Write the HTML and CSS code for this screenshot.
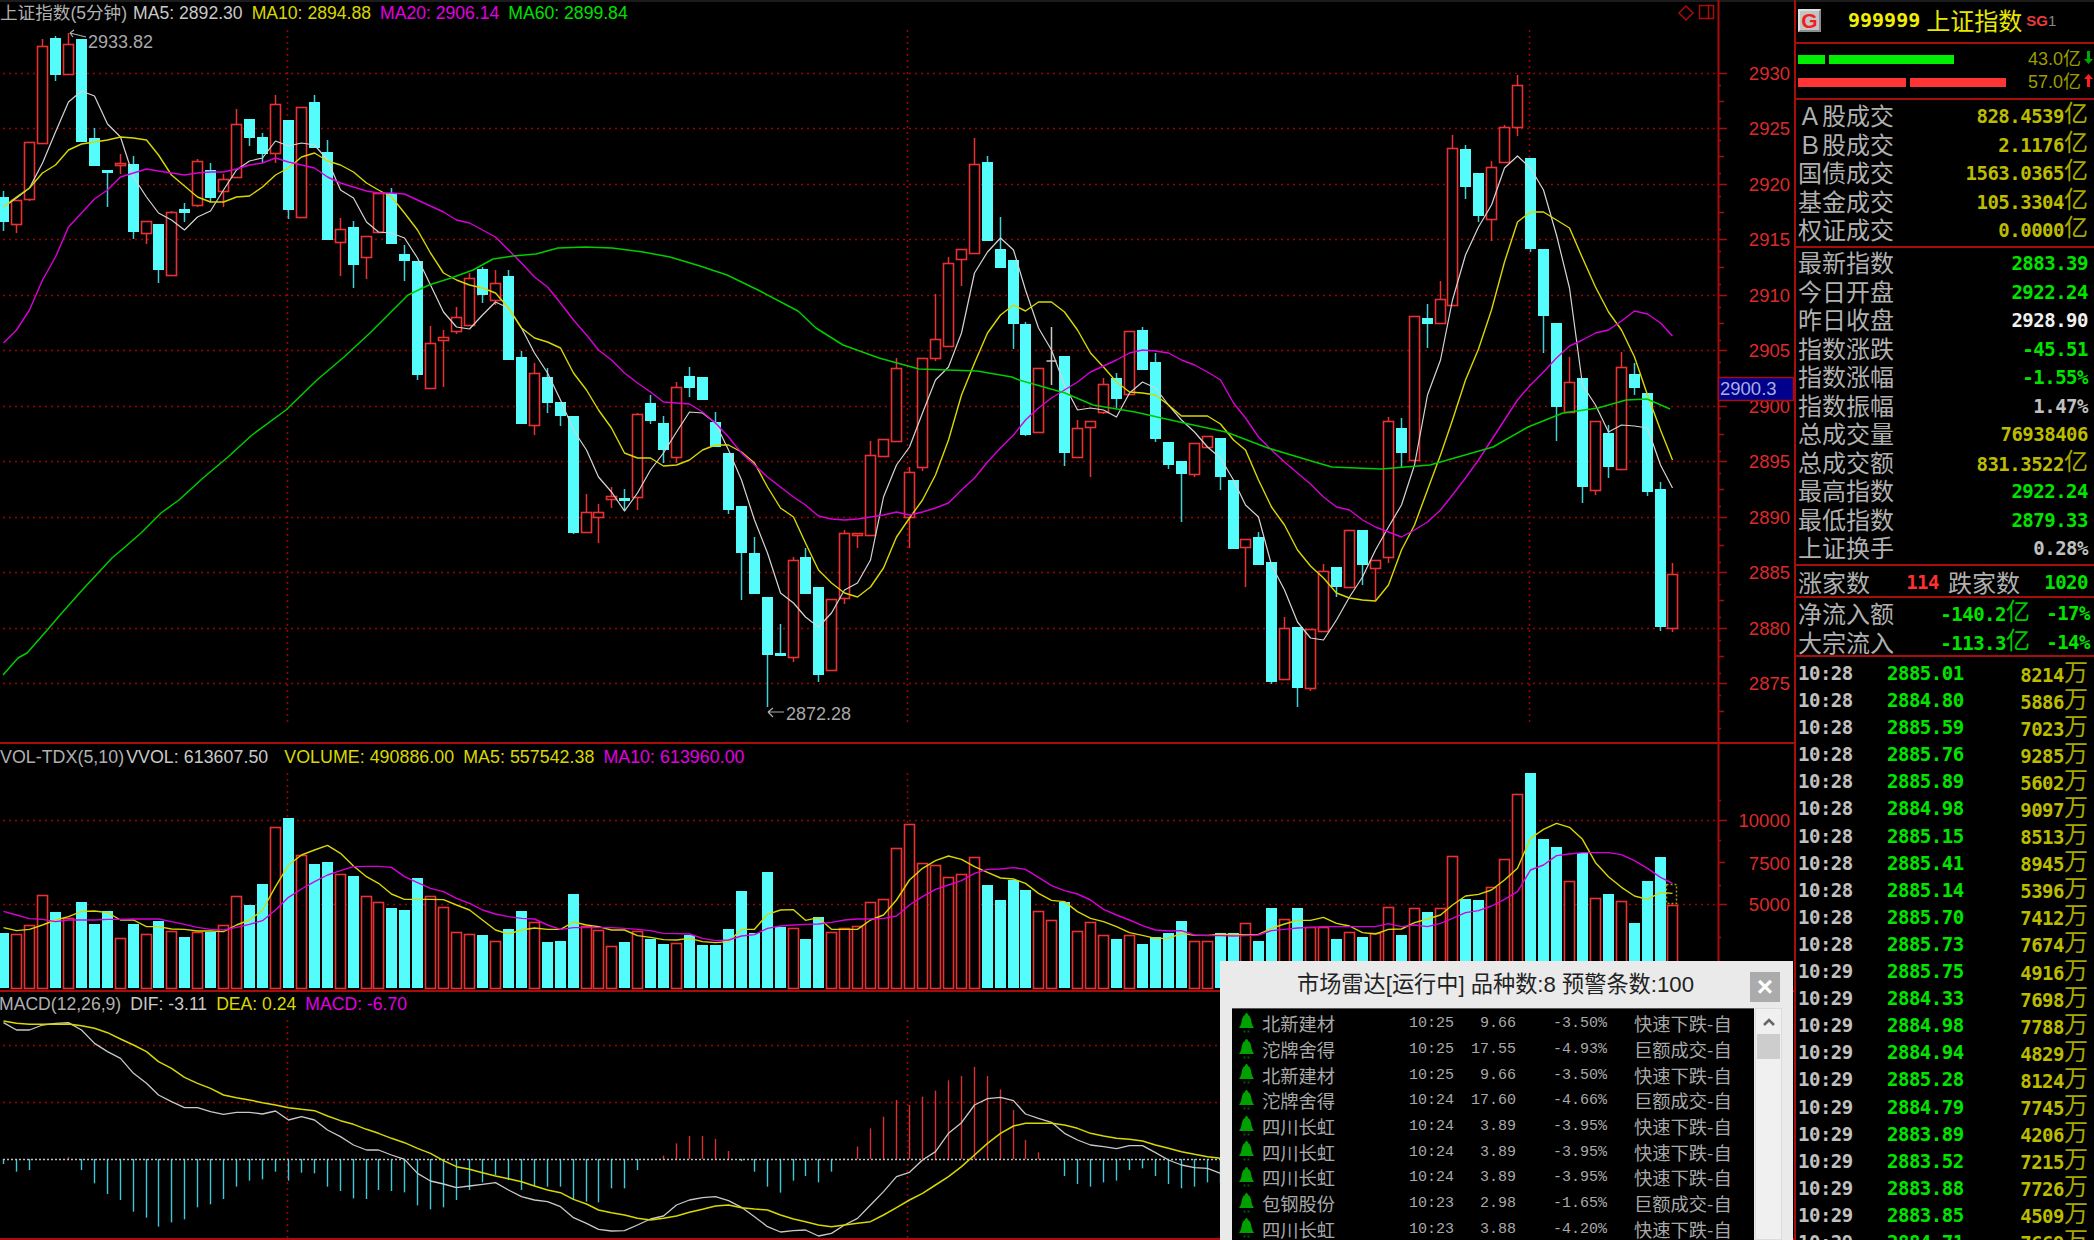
FILE: index.html
```html
<!DOCTYPE html>
<html lang="zh-CN">
<head>
<meta charset="utf-8">
<title>上证指数</title>
<link rel="stylesheet" href="styles.css">
</head>
<body>
<svg class="defs" aria-hidden="true"><defs>
  <symbol id="bell" viewBox="0 0 17 24">
    <path d="M8.500 1C7.500 1 7 2 7 3 4.500 4 4 7 3.500 10 3 13 2 14.500 1 16H16C15 14.500 14 13 13.500 10 13 7 12.500 4 10 3 10 2 9.500 1 8.500 1Z"/>
    <rect class="bell-dot" x="5.500" y="18.500" width="2" height="2"/><rect class="bell-dot" x="9.500" y="18.500" width="2" height="2"/>
  </symbol>
</defs></svg>
<div class="app">
  <div class="charts">
    <section class="pane pane-main">
      <div class="legend legend-main">
        <span class="c-gray first">上证指数(5分钟)</span>
        <span class="c-white">MA5: 2892.30</span>
        <span class="c-yellow">MA10: 2894.88</span>
        <span class="c-magenta">MA20: 2906.14</span>
        <span class="c-green">MA60: 2899.84</span>
      </div>
      <svg class="plot" width="1794" height="742" viewBox="0 0 1794 742">
        <rect class="top-edge" x="0" y="0" width="1794" height="2"/>
        <g id="plot-main"></g>
        <path class="mark" d="M86 37 70 33M70 33 74 30M70 33 73 37"/>
        <text class="mark-text" x="88" y="48">2933.82</text>
        <path class="mark" d="M784 712H768M768 712 773 708M768 712 773 717"/>
        <text class="mark-text" x="786" y="720">2872.28</text>
        <path class="tool" d="M1686 6 1693 13 1686 20 1679 13Z"/>
        <path class="tool" d="M1699.500 5.500H1713.500V18.500H1699.500ZM1708.500 5.500V18.500"/>
        <text class="axis" x="1790" y="79.500">2930</text>
        <text class="axis" x="1790" y="135">2925</text>
        <text class="axis" x="1790" y="190.500">2920</text>
        <text class="axis" x="1790" y="246">2915</text>
        <text class="axis" x="1790" y="301.500">2910</text>
        <text class="axis" x="1790" y="357">2905</text>
        <text class="axis" x="1790" y="412.500">2900</text>
        <text class="axis" x="1790" y="468">2895</text>
        <text class="axis" x="1790" y="523.500">2890</text>
        <text class="axis" x="1790" y="579">2885</text>
        <text class="axis" x="1790" y="634.500">2880</text>
        <text class="axis" x="1790" y="690">2875</text>
        <rect class="cur-box" x="1718.500" y="377.500" width="75" height="23"/>
        <text class="cur-text" x="1720" y="395">2900.3</text>
      </svg>
    </section>
    <section class="pane pane-vol">
      <div class="legend legend-vol">
        <span class="c-gray first-vol">VOL-TDX(5,10)</span>
        <span class="c-white">VVOL: 613607.50</span>
        <span class="c-yellow gap-wide">VOLUME: 490886.00</span>
        <span class="c-yellow">MA5: 557542.38</span>
        <span class="c-magenta">MA10: 613960.00</span>
      </div>
      <svg class="plot" width="1794" height="246" viewBox="0 744 1794 246">
        <g id="plot-vol"></g>
        <text class="axis" x="1790" y="827">10000</text>
        <text class="axis" x="1790" y="870">7500</text>
        <text class="axis" x="1790" y="911">5000</text>
      </svg>
    </section>
    <section class="pane pane-macd">
      <div class="legend legend-macd">
        <span class="c-gray">MACD(12,26,9)</span>
        <span class="c-white">DIF: -3.11</span>
        <span class="c-yellow">DEA: 0.24</span>
        <span class="c-magenta">MACD: -6.70</span>
      </div>
      <svg class="plot" width="1794" height="246" viewBox="0 992 1794 246">
        <g id="plot-macd"></g>
      </svg>
    </section>
  </div>

  <aside class="side">
    <header class="head">
      <span class="g-badge">G</span>
      <span class="code">999999</span>
      <span class="head-name">上证指数</span>
      <span class="sg">SG</span><span class="sg-n">1</span>
    </header>
    <section class="flow">
      <div class="flow-row">
        <div class="flow-bars"><i class="bar bar-g" style="width:27px"></i><i class="bar bar-g" style="width:125px"></i></div>
        <span class="flow-text">43.0<span class="flow-unit">亿</span></span>
        <svg class="arrow a-down" viewBox="0 0 9 13"><path d="M3 0H6V8H9L4.500 13 0 8H3Z"/></svg>
      </div>
      <div class="flow-row">
        <div class="flow-bars"><i class="bar bar-r" style="width:108px"></i><i class="bar bar-r" style="width:96px"></i></div>
        <span class="flow-text">57.0<span class="flow-unit">亿</span></span>
        <svg class="arrow a-up" viewBox="0 0 9 13"><path d="M3 13H6V5H9L4.500 0 0 5H3Z"/></svg>
      </div>
    </section>
    <section class="group group-a">
      <div class="row"><span class="lab">Ａ股成交</span><span class="val y">828.4539<span class="unit">亿</span></span></div>
      <div class="row"><span class="lab">Ｂ股成交</span><span class="val y">2.1176<span class="unit">亿</span></span></div>
      <div class="row"><span class="lab">国债成交</span><span class="val y">1563.0365<span class="unit">亿</span></span></div>
      <div class="row"><span class="lab">基金成交</span><span class="val y">105.3304<span class="unit">亿</span></span></div>
      <div class="row"><span class="lab">权证成交</span><span class="val y">0.0000<span class="unit">亿</span></span></div>
    </section>
    <section class="group group-b">
      <div class="row"><span class="lab">最新指数</span><span class="val g">2883.39</span></div>
      <div class="row"><span class="lab">今日开盘</span><span class="val g">2922.24</span></div>
      <div class="row"><span class="lab">昨日收盘</span><span class="val w">2928.90</span></div>
      <div class="row"><span class="lab">指数涨跌</span><span class="val g">-45.51</span></div>
      <div class="row"><span class="lab">指数涨幅</span><span class="val g">-1.55%</span></div>
      <div class="row"><span class="lab">指数振幅</span><span class="val l">1.47%</span></div>
      <div class="row"><span class="lab">总成交量</span><span class="val y">76938406</span></div>
      <div class="row"><span class="lab">总成交额</span><span class="val y">831.3522<span class="unit">亿</span></span></div>
      <div class="row"><span class="lab">最高指数</span><span class="val g">2922.24</span></div>
      <div class="row"><span class="lab">最低指数</span><span class="val g">2879.33</span></div>
      <div class="row"><span class="lab">上证换手</span><span class="val l">0.28%</span></div>
    </section>
    <section class="group breadth">
      <span class="lab">涨家数</span><span class="val r">114</span><span class="lab lab-2">跌家数</span><span class="val g">1020</span>
    </section>
    <section class="group group-c">
      <div class="row"><span class="lab lab-fill">净流入额</span><span class="val g">-140.2<span class="unit ug">亿</span></span><span class="val g pct">-17%</span></div>
      <div class="row"><span class="lab lab-fill">大宗流入</span><span class="val g">-113.3<span class="unit ug">亿</span></span><span class="val g pct">-14%</span></div>
    </section>
    <section class="trades">
      <div class="trade"><span class="l">10:28</span><span class="g">2885.01</span><span class="y vol">8214<span class="unit">万</span></span></div>
      <div class="trade"><span class="l">10:28</span><span class="g">2884.80</span><span class="y vol">5886<span class="unit">万</span></span></div>
      <div class="trade"><span class="l">10:28</span><span class="g">2885.59</span><span class="y vol">7023<span class="unit">万</span></span></div>
      <div class="trade"><span class="l">10:28</span><span class="g">2885.76</span><span class="y vol">9285<span class="unit">万</span></span></div>
      <div class="trade"><span class="l">10:28</span><span class="g">2885.89</span><span class="y vol">5602<span class="unit">万</span></span></div>
      <div class="trade"><span class="l">10:28</span><span class="g">2884.98</span><span class="y vol">9097<span class="unit">万</span></span></div>
      <div class="trade"><span class="l">10:28</span><span class="g">2885.15</span><span class="y vol">8513<span class="unit">万</span></span></div>
      <div class="trade"><span class="l">10:28</span><span class="g">2885.41</span><span class="y vol">8945<span class="unit">万</span></span></div>
      <div class="trade"><span class="l">10:28</span><span class="g">2885.14</span><span class="y vol">5396<span class="unit">万</span></span></div>
      <div class="trade"><span class="l">10:28</span><span class="g">2885.70</span><span class="y vol">7412<span class="unit">万</span></span></div>
      <div class="trade"><span class="l">10:28</span><span class="g">2885.73</span><span class="y vol">7674<span class="unit">万</span></span></div>
      <div class="trade"><span class="l">10:29</span><span class="g">2885.75</span><span class="y vol">4916<span class="unit">万</span></span></div>
      <div class="trade"><span class="l">10:29</span><span class="g">2884.33</span><span class="y vol">7698<span class="unit">万</span></span></div>
      <div class="trade"><span class="l">10:29</span><span class="g">2884.98</span><span class="y vol">7788<span class="unit">万</span></span></div>
      <div class="trade"><span class="l">10:29</span><span class="g">2884.94</span><span class="y vol">4829<span class="unit">万</span></span></div>
      <div class="trade"><span class="l">10:29</span><span class="g">2885.28</span><span class="y vol">8124<span class="unit">万</span></span></div>
      <div class="trade"><span class="l">10:29</span><span class="g">2884.79</span><span class="y vol">7745<span class="unit">万</span></span></div>
      <div class="trade"><span class="l">10:29</span><span class="g">2883.89</span><span class="y vol">4206<span class="unit">万</span></span></div>
      <div class="trade"><span class="l">10:29</span><span class="g">2883.52</span><span class="y vol">7215<span class="unit">万</span></span></div>
      <div class="trade"><span class="l">10:29</span><span class="g">2883.88</span><span class="y vol">7726<span class="unit">万</span></span></div>
      <div class="trade"><span class="l">10:29</span><span class="g">2883.85</span><span class="y vol">4509<span class="unit">万</span></span></div>
      <div class="trade"><span class="l">10:29</span><span class="g">2884.71</span><span class="y vol">7669<span class="unit">万</span></span></div>
    </section>
  </aside>

  <div class="radar">
    <div class="radar-head">
      <span class="radar-title">市场雷达[运行中] 品种数:8 预警条数:100</span>
      <span class="radar-close">×</span>
    </div>
    <div class="radar-body">
      <div class="radar-list">
        <div class="radar-row"><svg class="bell"><use href="#bell"/></svg><span>北新建材</span><span class="m">10:25</span><span class="m num">9.66</span><span class="m pc">-3.50%</span><span>快速下跌-自</span></div>
        <div class="radar-row"><svg class="bell"><use href="#bell"/></svg><span>沱牌舍得</span><span class="m">10:25</span><span class="m num">17.55</span><span class="m pc">-4.93%</span><span>巨额成交-自</span></div>
        <div class="radar-row"><svg class="bell"><use href="#bell"/></svg><span>北新建材</span><span class="m">10:25</span><span class="m num">9.66</span><span class="m pc">-3.50%</span><span>快速下跌-自</span></div>
        <div class="radar-row"><svg class="bell"><use href="#bell"/></svg><span>沱牌舍得</span><span class="m">10:24</span><span class="m num">17.60</span><span class="m pc">-4.66%</span><span>巨额成交-自</span></div>
        <div class="radar-row"><svg class="bell"><use href="#bell"/></svg><span>四川长虹</span><span class="m">10:24</span><span class="m num">3.89</span><span class="m pc">-3.95%</span><span>快速下跌-自</span></div>
        <div class="radar-row"><svg class="bell"><use href="#bell"/></svg><span>四川长虹</span><span class="m">10:24</span><span class="m num">3.89</span><span class="m pc">-3.95%</span><span>快速下跌-自</span></div>
        <div class="radar-row"><svg class="bell"><use href="#bell"/></svg><span>四川长虹</span><span class="m">10:24</span><span class="m num">3.89</span><span class="m pc">-3.95%</span><span>快速下跌-自</span></div>
        <div class="radar-row"><svg class="bell"><use href="#bell"/></svg><span>包钢股份</span><span class="m">10:23</span><span class="m num">2.98</span><span class="m pc">-1.65%</span><span>巨额成交-自</span></div>
        <div class="radar-row"><svg class="bell"><use href="#bell"/></svg><span>四川长虹</span><span class="m">10:23</span><span class="m num">3.88</span><span class="m pc">-4.20%</span><span>快速下跌-自</span></div>
      </div>
      <div class="scrollbar">
        <svg class="chevron" viewBox="0 0 12 8"><path d="M1 7 6 2 11 7"/></svg>
        <div class="thumb"></div>
      </div>
    </div>
  </div>
</div>
<script src="chart.js"></script>
</body>
</html>
```
FILE: styles.css
```css
* { box-sizing: border-box; }
html, body { margin: 0; padding: 0; background: #000; }
.defs { position: absolute; width: 0; height: 0; }
.app {
  position: relative;
  display: flex;
  width: 2094px;
  height: 1240px;
  overflow: hidden;
  background: #000;
  font-family: "Liberation Sans", "Noto Sans CJK SC", sans-serif;
}

/* chart column */
.charts { display: flex; flex-direction: column; width: 1794px; flex: none; }
.pane { position: relative; flex: none; border-bottom: 2px solid #a80c0c; }
.pane-main { height: 744px; }
.pane-vol { height: 248px; }
.pane-macd { height: 248px; }
.plot { display: block; }
.legend {
  position: absolute;
  left: 0;
  display: flex;
  gap: 9px;
  font-size: 17.600px;
  line-height: 22px;
  white-space: nowrap;
}
.legend-main { top: 2px; }
.legend-vol { top: 2px; font-size: 17.800px; letter-spacing: 0.050px; }
.legend-macd { top: 1px; left: -1px; }
.first { margin-right: -3px; }
.first-vol { margin-right: -7px; }
.gap-wide { margin-left: 7px; }
.c-gray { color: #b0b0b0; }
.c-white { color: #c8c8c8; }
.c-yellow { color: #d8d800; }
.c-magenta { color: #e000e0; }
.c-green { color: #00e000; }

.top-edge { fill: #1c1c1c; }
.axis { fill: #dc2a2a; font-size: 18.500px; text-anchor: end; }
.cur-box { fill: #00008c; stroke: #a80c0c; stroke-width: 1.500; }
.cur-text { fill: #a8b0e0; font-size: 18.500px; }
.mark { fill: none; stroke: #b0b0b0; stroke-width: 1.200; }
.mark-text { fill: #a8a8a8; font-size: 18px; }
.tool { fill: none; stroke: #a80c0c; stroke-width: 1.500; }

/* right panel */
.side {
  flex: none;
  width: 300px;
  height: 1240px;
  border-left: 2px solid #a80c0c;
  display: flex;
  flex-direction: column;
  color: #b4b4b4;
}
.head {
  height: 44px;
  flex: none;
  display: flex;
  align-items: center;
  padding: 0 0 4px 2px;
  border-top: 2px solid #1c1c1c;
  border-bottom: 2px solid #a80c0c;
}
.g-badge {
  width: 23px;
  height: 23px;
  background: #c4c4c4;
  border: 2px outset #e0e0e0;
  color: #f02020;
  font: bold 21px/19px "Liberation Sans", sans-serif;
  text-align: center;
}
.code {
  margin-left: 27px;
  color: #f0f000;
  font: bold 20px "DejaVu Sans Mono", monospace;
}
.head-name { margin-left: 6px; color: #e8e800; font: 24px/28px "Noto Sans CJK SC", sans-serif; }
.sg { margin-left: 4px; color: #e83c3c; font: bold 15px "Liberation Sans", sans-serif; }
.sg-n { color: #888; font: 15px "Liberation Sans", sans-serif; }

.flow {
  height: 56px;
  flex: none;
  padding: 4px 0 0 2px;
  border-bottom: 2px solid #a80c0c;
}
.flow-row { display: flex; align-items: center; height: 23px; }
.flow-bars { display: flex; gap: 4px; width: 230px; flex: none; }
.bar { display: block; height: 9px; }
.bar-g { background: #00ee00; }
.bar-r { background: #ff3434; }
.flow-text { width: 56px; flex: none; color: #9c9c00; font-size: 18px; line-height: 22px; margin-top: -2px; white-space: nowrap; }
.flow-unit { font-size: 18px; }
.arrow { width: 9px; height: 13px; flex: none; margin-top: -4px; }
.a-down { fill: #00a800; }
.a-up { fill: #ff2020; }

.group {
  flex: none;
  padding: 0 6px 0 2px;
  border-bottom: 2px solid #a80c0c;
}
.group-a { height: 148px; padding-top: 2px; }
.group-b { height: 318px; padding-top: 1px; }
.group-c { height: 59px; padding-top: 1px; }
.row { display: flex; justify-content: space-between; align-items: center; height: 28.500px; }
.lab {
  color: #b0b0b0;
  font: 24px/28px "Noto Sans CJK SC", sans-serif;
  white-space: nowrap;
}
.group-a .lab, .group-b .lab, .group-a .val { margin-top: -2px; }
.lab-fill { flex: 1; }
.val {
  font: bold 19px/28px "DejaVu Sans Mono", monospace;
  letter-spacing: -0.500px;
  white-space: nowrap;
}
.unit {
  font: 24px/24px "Noto Sans CJK SC", sans-serif;
  letter-spacing: 0;
  color: #a8a800;
  vertical-align: 1px;
}
.ug { color: #00c800; }
.pct { width: 60px; text-align: right; margin-right: -2px; }
.breadth {
  height: 32px;
  padding-top: 1px;
  display: grid;
  grid-template-columns: 72px 69px 81px 68px;
  align-items: center;
}
.breadth .val { text-align: right; }
.lab-2 { padding-left: 9px; }
.g { color: #00e400; }
.y { color: #bcbc00; }
.w { color: #f0f0f0; }
.l { color: #c0c0c0; }
.r { color: #ff3030; }

.trades { flex: 1; min-height: 0; overflow: hidden; padding: 1.500px 6px 0 2px; }
.trade {
  display: grid;
  grid-template-columns: 89px 1fr auto;
  align-items: center;
  height: 27.100px;
  font: bold 19px/27px "DejaVu Sans Mono", monospace;
  letter-spacing: -0.500px;
}
.vol { white-space: nowrap; }

/* radar popup */
.radar {
  position: absolute;
  left: 1220px;
  top: 961px;
  width: 573px;
  height: 279px;
  background: #eaeaea;
  display: flex;
  flex-direction: column;
}
.radar-head { flex: none; height: 47px; display: flex; align-items: flex-start; }
.radar-title {
  margin: 10px 0 0 77px;
  color: #222;
  font-size: 22.200px;
  line-height: 28px;
  white-space: nowrap;
}
.radar-close {
  margin: 11px 13px 0 auto;
  width: 30px;
  height: 30px;
  background: #ababab;
  color: #fff;
  text-align: center;
  font: bold 28px/30px "Liberation Sans", sans-serif;
}
.radar-body { flex: 1; min-height: 0; display: flex; padding-left: 12px; }
.radar-list {
  width: 522px;
  flex: none;
  background: #000;
  border-top: 1px solid #555;
  padding-top: 2px;
  overflow: hidden;
}
.radar-row {
  display: grid;
  grid-template-columns: 30px 147px 45px 62px 118px auto;
  align-items: center;
  height: 25.700px;
  color: #a8a8a8;
  font: 18.300px/25px "Noto Sans CJK SC", sans-serif;
  white-space: nowrap;
}
.bell { width: 17px; height: 24px; margin-left: 6px; fill: #00a000; }
.bell-dot { fill: #005800; }
.m { font: 15px/25px "Liberation Mono", monospace; }
.num { text-align: right; }
.pc { padding-left: 37px; }
.scrollbar {
  width: 27px;
  flex: none;
  margin-left: 1px;
  background: #f0f0f0;
  border: 1px solid #dcdcdc;
  padding: 9px 1px 0;
  display: flex;
  flex-direction: column;
  align-items: center;
}
.chevron { width: 12px; height: 8px; fill: none; stroke: #666; stroke-width: 2.500; }
.thumb { width: 100%; height: 25px; margin-top: 8px; background: #cdcdcd; }
```
FILE: chart.js
```js
(function () {
  var NS = 'http://www.w3.org/2000/svg';
  var RED = '#e83232', CYAN = '#54fcfc', GRID = '#a00000', AXIS = '#a80c0c';
  function X(i) { return Math.round(3.2 + 12.94 * i) + 0.5; }
  function el(parent, name, attrs) {
    var n = document.createElementNS(NS, name);
    for (var k in attrs) n.setAttribute(k, attrs[k]);
    parent.appendChild(n);
    return n;
  }
  function line(g, x1, y1, x2, y2, color, w, dash) {
    var a = { x1: x1, y1: y1, x2: x2, y2: y2, stroke: color, 'stroke-width': w || 1.5 };
    if (dash) a['stroke-dasharray'] = dash;
    return el(g, 'line', a);
  }
  function poly(g, pts, color, w) {
    el(g, 'polyline', { points: pts.join(' '), fill: 'none', stroke: color, 'stroke-width': w, 'stroke-linejoin': 'round' });
  }
  function series(g, ys, color, w, map) {
    poly(g, ys.map(function (y, i) { return X(i) + ',' + (map ? map(y) : y); }), color, w);
  }
  function zoomY(z) { return z / 3 + 740; }

  var C = [
    ['c',197,222,191,231],['r',200,224,200,233],['r',142,199,142,201],['r',46,143,39,143],['c',38,75,36,81],
    ['r',44,74,33,74],['c',39,142,39,142],['c',138,166,128,166],['c',170,171,170,207],['r',163,165,154,174],
    ['c',164,232,156,239],['r',221,233,221,244],['c',224,270,224,283],['r',212,275,211,275],['c',209,213,203,222],
    ['r',161,205,159,207],['c',170,198,163,202],['r',179,191,174,207],['r',124,177,109,177],['c',119,138,119,146],
    ['c',137,154,133,163],['r',104,153,95,163],['c',120,210,120,219],['r',107,217,107,217],['c',102,148,95,148],
    ['c',152,240,140,240],['r',229,242,218,276],['c',227,265,221,288],['r',236,257,236,279],['r',193,232,193,232],
    ['c',193,244,188,244],['c',254,261,245,281],['c',261,375,261,380],['r',343,388,326,389],['r',337,340,330,387],
    ['r',317,331,307,334],['r',278,325,273,325],['c',269,295,267,303],['r',283,300,270,305],['c',276,360,270,360],
    ['c',357,424,351,424],['r',373,425,363,435],['c',377,403,368,413],['c',402,416,402,426],['c',416,533,416,534],
    ['r',512,532,494,532],['r',512,517,504,543],['r',496,499,487,508],['c',498,501,489,511],['r',414,497,413,510],
    ['c',403,421,395,424],['c',423,450,416,463],['r',387,457,382,463],['c',376,388,367,397],['c',377,400,377,400],
    ['c',422,447,412,447],['c',453,510,453,514],['c',506,553,506,600],['c',553,594,537,594],['c',597,655,597,707],
    ['c',653,655,624,655],['r',560,657,557,662],['c',557,594,548,594],['c',587,675,587,682],['r',599,670,599,670],
    ['r',533,598,530,604],['r',533,535,533,548],['r',455,535,441,535],['r',439,456,439,456],['r',368,441,358,441],
    ['r',472,517,467,548],['r',358,467,358,471],['r',339,358,294,361],['r',263,346,257,347],['r',249,259,249,286],
    ['r',164,253,138,253],['c',162,241,156,241],['c',249,268,217,268],['c',260,324,260,349],['c',324,435,322,436],
    ['r',368,432,368,432],['w',361,361,327,385],['c',356,453,356,466],['r',428,457,420,457],['r',421,427,421,477],
    ['r',384,412,378,414],['c',378,399,373,408],['r',331,394,331,394],['c',330,370,327,370],['c',362,439,353,442],
    ['c',442,465,442,469],['c',461,474,461,522],['r',443,474,443,477],['r',436,447,436,447],['c',438,477,438,490],
    ['c',480,549,480,549],['r',539,547,539,587],['c',537,565,532,565],['c',562,682,562,684],['r',628,679,617,679],
    ['c',627,688,627,707],['r',629,688,629,691],['r',571,631,564,631],['c',567,587,567,597],['r',530,587,530,587],
    ['c',530,565,530,585],['r',560,568,560,600],['r',421,557,417,563],['c',428,453,418,468],['r',316,460,316,460],
    ['c',318,324,304,348],['r',299,323,281,323],['r',148,305,135,305],['c',149,187,145,199],['c',173,216,173,222],
    ['r',167,219,161,241],['r',127,162,125,162],['r',85,127,75,136],['c',158,249,158,252],['c',249,316,249,353],
    ['c',323,407,323,441],['r',382,412,357,412],['c',378,487,378,503],['r',421,490,421,495],['c',433,467,425,478],
    ['r',367,469,352,469],['c',374,388,363,395],['c',393,492,393,496],['c',489,627,482,631],['r',574,628,563,632]
  ];

  var MA5 = [207,198,188,163,132,102,91,96,124,137,177,197,213,220,230,217,211,190,170,161,158,141,146,143,145,160,190,198,222,232,233,238,258,285,312,327,329,315,302,308,328,353,373,
    400,430,450,477,492,511,493,470,453,432,412,413,423,450,480,520,553,593,603,617,627,613,590,583,560,497,465,447,413,380,367,333,273,252,238,250,290,328,350,385,
    410,408,410,417,393,382,388,405,420,432,447,458,480,505,517,565,590,622,638,640,620,597,577,550,527,505,465,395,360,300,255,227,205,168,156,168,190,235,288,385,405,432,425,426,428,465,488];
  var MA10 = [207,197,188,173,165,150,144,142,140,137,138,140,155,175,186,197,202,202,197,196,187,175,168,157,153,161,165,172,183,190,197,213,230,253,273,280,285,288,293,308,328,338,342,348,373,
    390,410,428,453,458,458,466,465,460,450,445,445,452,463,487,508,517,543,570,583,593,597,587,568,537,518,500,475,440,395,363,333,315,305,311,302,302,312,330,353,367,382,
    392,393,395,405,416,416,416,424,440,450,480,507,525,550,566,578,593,598,600,601,585,550,525,490,455,420,380,349,310,262,222,212,212,220,228,258,287,312,330,357,395,430,460];
  var MA20 = [343,330,310,280,257,227,213,199,190,177,173,169,171,173,175,173,172,172,169,165,163,158,162,165,168,177,183,187,191,193,193,194,200,206,212,220,223,230,237,250,263,277,287,303,320,335,350,360,373,383,392,402,403,404,
    412,423,437,453,465,477,487,497,505,516,519,520,519,517,515,512,515,512,508,503,490,478,462,448,435,420,408,398,390,382,372,366,360,353,350,351,353,360,365,372,380,
    403,418,437,450,462,473,484,497,507,510,520,527,532,537,530,522,510,495,478,460,440,420,400,385,372,358,346,340,333,330,321,311,314,323,336];
  var MA60 = [[3,675],[18,658],[27,653],[49,628],[60,615],[85,587],[112,558],[125,547],[141,533],[161,513],[179,500],[203,478],[228,457],[252,435],[286,410],[317,380],[344,357],[370,333],[393,310],[408,295],[429,285],[451,278],[473,270],[493,259],[513,256],[536,254],[558,248],[585,247],[612,248],[643,252],[670,257],[700,266],[727,275],[758,290],[798,311],[816,328],[843,345],[879,358],[919,369],[977,371],[1012,377],[1019,380],[1065,393],[1093,405],[1135,412],[1184,423],[1226,432],[1268,448],[1318,463],[1332,467],[1381,469],[1430,465],[1458,457],[1493,447],[1528,427],[1563,413],[1598,408],[1626,400],[1647,399],[1670,409]];

  var VOL = [580,582,554,464,517,535,485,553,513,595,553,581,544,572,590,575,575,554,468,494,431,262,234,346,373,365,401,409,469,487,503,509,414,469,500,577,581,584,604,567,513,545,607,602,463,558,569,618,
    607,572,598,611,608,585,616,616,566,454,578,395,560,563,598,530,577,563,559,487,478,325,252,370,374,410,401,352,436,481,420,449,514,541,485,572,545,586,598,586,611,592,580,544,604,604,580,580,
    549,602,503,536,503,560,560,598,577,590,580,500,585,505,517,505,347,477,481,441,356,162,98,296,320,424,340,473,463,482,548,423,350,496];
  var VMA5 = [563,572,568,555,540,530,514,513,518,540,540,560,560,567,568,573,573,575,555,540,510,440,375,345,330,316,340,378,410,430,462,478,478,478,479,495,510,540,570,582,570,564,568,568,546,555,560,570,
    570,587,592,599,600,595,605,608,605,568,568,523,510,509,541,533,568,568,568,540,525,480,420,385,362,348,358,380,397,414,417,430,460,481,485,515,535,545,560,578,586,595,595,580,586,586,583,583,
    585,583,565,552,541,541,532,550,558,578,582,568,567,548,537,525,495,468,463,450,420,385,295,268,250,262,298,368,410,442,468,478,457,460];
  var VMA10 = [514,525,536,538,545,540,540,540,538,538,537,537,537,545,553,562,568,570,562,553,542,510,472,447,425,405,392,380,379,379,382,410,428,445,455,475,490,510,522,530,535,537,555,568,563,563,563,563,
    565,568,572,580,581,582,595,602,600,588,584,565,558,555,553,552,547,540,537,537,535,528,495,470,448,435,422,400,388,387,383,388,412,437,452,462,480,508,525,540,557,570,573,572,585,587,587,588,
    587,585,572,568,564,562,560,560,560,560,560,551,560,555,560,550,535,518,512,498,478,455,390,375,347,342,338,338,338,344,362,385,412,430];

  var HIST = [1272,1295,1290,0,0,1252,1290,1330,1362,1380,1415,1433,1460,1447,1438,1402,1393,1377,1340,1322,1318,1295,1322,1298,1300,1340,1353,1375,1377,1350,1353,1357,1396,1408,1402,1380,1350,1327,1305,1320,1350,1338,1340,1340,1380,1385,1387,1345,
    1345,1290,0,1247,1210,1188,1188,1197,1233,1263,1295,1340,1358,1322,1308,1327,1295,1255,1220,1165,1130,1080,1095,1070,1052,1021,1008,981,1008,1048,1110,1200,1237,0,1308,1332,1340,1327,1322,1290,1285,1308,1332,1345,1340,1327,1330];
  var DIF = [848,870,870,855,850,848,870,910,935,955,1000,1030,1065,1085,1103,1103,1115,1123,1117,1117,1122,1113,1140,1130,1140,1170,1190,1215,1230,1230,1245,1258,1300,1323,1332,1343,1338,1333,1328,1350,1370,1380,1385,1400,1433,1450,1468,1473,
    1472,1455,1437,1428,1395,1380,1373,1370,1382,1402,1430,1460,1476,1472,1470,1488,1480,1455,1435,1395,1355,1310,1297,1260,1235,1180,1148,1095,1076,1072,1082,1122,1135,1147,1180,1200,1215,1220,1226,1217,1217,1238,1260,1275,1283,1285,1300];
  var DEA = [843,850,853,853,853,852,857,865,878,897,915,935,965,985,1012,1030,1045,1065,1073,1080,1088,1095,1103,1108,1112,1128,1142,1153,1168,1180,1195,1208,1225,1240,1262,1280,1288,1298,1308,1316,1325,1338,1350,1358,1378,1392,1410,1418,
    1425,1435,1440,1435,1428,1417,1408,1398,1395,1403,1407,1410,1425,1437,1445,1455,1460,1455,1450,1445,1425,1403,1380,1360,1335,1310,1280,1245,1210,1180,1158,1150,1150,1150,1155,1165,1180,1188,1195,1198,1203,1215,1225,1235,1243,1250,1255];

  var VX = [287.5, 907.5, 1529.5], DASH = '2 4';

  /* ---------- main pane ---------- */
  var g = document.getElementById('plot-main');
  var k;
  for (k = 0; k < 12; k++) {
    var y = Math.round(72.5 + 55.5 * k) + 0.5;
    line(g, 3, y, 1718, y, GRID, 1.5, DASH);
    line(g, 1718, y, 1727, y, AXIS, 1.5);
    [12, 28, 45].forEach(function (d, n) { line(g, 1718, y + d, 1718 + (n === 1 ? 6 : 3), y + d, AXIS, 1.5); });
  }
  VX.forEach(function (x) { line(g, x, 30, x, 722, GRID, 1.5, DASH); });
  line(g, 1718.5, 0, 1718.5, 742, AXIS, 2);

  C.forEach(function (c, n) {
    var x = X(n);
    if (c[0] === 'w') {
      line(g, x, c[3], x, c[4], '#c8c8c8', 1.5);
      line(g, x - 5, c[1], x + 5, c[1], '#c8c8c8', 1.5);
      return;
    }
    var col = c[0] === 'c' ? '#40d0d8' : RED;
    line(g, x, c[3], x, c[4], col, 1.5);
    if (c[0] === 'c') {
      el(g, 'rect', { x: x - 5.5, y: c[1], width: 11, height: Math.max(c[2] - c[1], 3), fill: CYAN });
    } else {
      el(g, 'rect', { x: x - 5, y: c[1] + 0.5, width: 10, height: Math.max(c[2] - c[1], 2), fill: '#000', stroke: RED, 'stroke-width': 1.6 });
    }
  });
  series(g, MA5, '#d4d4d4', 1.2);
  series(g, MA10, '#d8d800', 1.4);
  series(g, MA20, '#d800d8', 1.4);
  poly(g, MA60.map(function (p) { return p.join(','); }), '#00cc00', 1.5);

  /* ---------- volume pane ---------- */
  g = document.getElementById('plot-vol');
  line(g, 3, 820.5, 1718, 820.5, GRID, 1.5, DASH);
  line(g, 3, 904.5, 1718, 904.5, GRID, 1.5, DASH);
  VX.forEach(function (x) { line(g, x, 773, x, 988, GRID, 1.5, DASH); });
  line(g, 1718.5, 744, 1718.5, 990, AXIS, 2);
  [[820.5, 9], [904.5, 9], [862.5, 7], [840.5, 3], [885.5, 3], [937.5, 3], [800.5, 3]].forEach(function (t) {
    line(g, 1718, t[0], 1718 + t[1], t[0], AXIS, 1.5);
  });
  VOL.forEach(function (z, n) {
    var top = Math.round(zoomY(z)), x = X(n), kind = C[n][0];
    if (kind === 'c') {
      el(g, 'rect', { x: x - 5.5, y: top, width: 11, height: 988 - top, fill: CYAN });
    } else {
      el(g, 'rect', { x: x - 5, y: top + 0.5, width: 10, height: 988 - top, fill: '#000', stroke: RED, 'stroke-width': 1.6 });
    }
  });
  el(g, 'rect', { x: 1666.5, y: 884.5, width: 10, height: 19, fill: 'none', stroke: '#a0a000', 'stroke-width': 1.5, 'stroke-dasharray': '2 2' });
  series(g, VMA5, '#d8d800', 1.4, zoomY);
  series(g, VMA10, '#d800d8', 1.4, zoomY);

  /* ---------- MACD pane ---------- */
  g = document.getElementById('plot-macd');
  line(g, 3, 1045.5, 1718, 1045.5, GRID, 1.5, DASH);
  line(g, 3, 1102.5, 1718, 1102.5, GRID, 1.5, DASH);
  VX.forEach(function (x) { line(g, x, 1020, x, 1238, GRID, 1.5, DASH); });
  line(g, 1718.5, 992, 1718.5, 1238, AXIS, 2);
  HIST.forEach(function (z, n) {
    if (!z) return;
    line(g, X(n), 1159, X(n), zoomY(z), z < 1257 ? '#d83030' : '#3cc8d8', 1.4);
  });
  line(g, 3, 1159.5, 1718, 1159.5, '#c0c0c0', 1.5, '2 2');
  series(g, DIF, '#c8c8c8', 1.3, zoomY);
  series(g, DEA, '#d8d800', 1.5, zoomY);
})();
```
